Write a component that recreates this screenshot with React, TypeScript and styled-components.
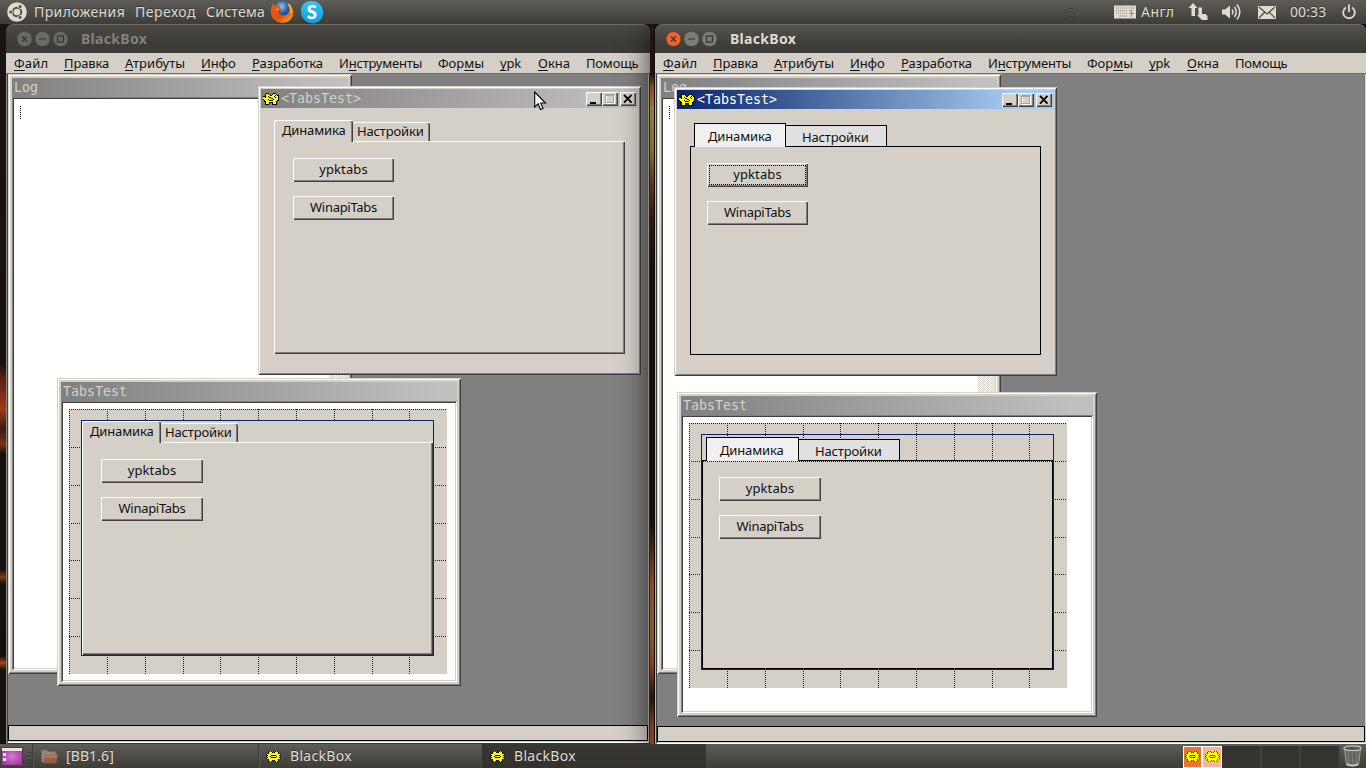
import React from "react";
import styled, { createGlobalStyle, css } from "styled-components";

const face = "#d4d0c8";
const ui = '"Noto Sans", "Open Sans", sans-serif';
const mono = '"DejaVu Sans Mono", "Liberation Mono", monospace';

const Global = createGlobalStyle`
  * { box-sizing: border-box; }
  body { margin: 0; overflow: hidden; background: #14110f; }
`;

const Desktop = styled.div`
  position: relative;
  width: 1366px;
  height: 768px;
  overflow: hidden;
  display: flex;
  flex-direction: column;
  justify-content: space-between;
  font-family: ${ui};
  background: #14110f;
  cursor: default;
`;

const Wallpaper = styled.div<{ $x: number; $w: number; $stops: string }>`
  position: absolute;
  top: 24px;
  left: ${(p) => p.$x}px;
  width: ${(p) => p.$w}px;
  height: 720px;
  background: linear-gradient(180deg, ${(p) => p.$stops});
`;

/* ---------- GNOME panels ---------- */

const Panel = styled.div`
  position: relative;
  z-index: 5;
  height: 24px;
  display: flex;
  align-items: center;
  color: #dfdbd2;
  font-size: 14px;
  line-height: 24px;
  white-space: nowrap;
  background: linear-gradient(180deg, #5d5c56 0%, #4d4c47 50%, #3d3c37 100%);
`;

const PanelText = styled.span<{ $w: number; $ls?: number; $gap?: number }>`
  width: ${(p) => p.$w}px;
  margin-left: ${(p) => p.$gap ?? 0}px;
  letter-spacing: ${(p) => p.$ls ?? 0}px;
  text-shadow: 0 -1px 0 rgba(0, 0, 0, 0.35);
`;

const PanelIcon = styled.span<{ $w: number; $gap?: number }>`
  display: flex;
  width: ${(p) => p.$w}px;
  margin-left: ${(p) => p.$gap ?? 0}px;
`;

const Grip = styled.span`
  width: 5px;
  height: 9px;
  margin-left: 3px;
  background: repeating-linear-gradient(180deg, #3c3b37 0 1px, #5a5954 1px 2px, transparent 2px 4px);
`;

const Spacer = styled.div`
  flex: 1;
`;

const Task = styled.div<{ $w: number; $active?: boolean }>`
  display: flex;
  align-items: center;
  width: ${(p) => p.$w}px;
  height: 24px;
  padding-left: 7px;
  border-left: 1px solid #3a3934;
  box-shadow: inset 1px 0 0 ${(p) => (p.$active ? "#2f2e2a" : "#5b5a55")};
  ${(p) => p.$active && css`background: linear-gradient(180deg, #383732, #33322e);`}
`;

const Pager = styled.div`
  display: flex;
  height: 22px;
  margin-top: 1px;
`;

const PagerCell = styled.div<{ $w: number; $bg?: string }>`
  width: ${(p) => p.$w}px;
  height: 22px;
  display: flex;
  align-items: center;
  justify-content: center;
  background: ${(p) => p.$bg ?? "#343330"};
  border: ${(p) => (p.$bg ? "1px solid #fff" : "0")};
  ${(p) => !p.$bg && css`border-right: 2px solid #42413d;`}
`;

/* ---------- Window-manager frame ---------- */

const Frame = styled.section<{ $x: number; $w: number; $h: number; $focus?: boolean }>`
  position: absolute;
  left: ${(p) => p.$x}px;
  top: 24px;
  width: ${(p) => p.$w}px;
  height: ${(p) => p.$h}px;
  display: flex;
  flex-direction: column;
  border-radius: 7px 7px 0 0;
  ${(p) => p.$focus && css`box-shadow: 0 8px 32px 2px rgba(0, 0, 0, 0.85);`}
`;

const FrameTitle = styled.header<{ $focus?: boolean }>`
  flex: none;
  height: 29px;
  display: flex;
  align-items: center;
  padding-left: 11px;
  padding-bottom: 1px;
  border-radius: 7px 7px 0 0;
  border-top: 1px solid #6b6a65;
  background: ${(p) =>
    p.$focus ? "linear-gradient(180deg, #55544f, #403f3a 60%, #3c3b37)" : "linear-gradient(180deg, #4a4944, #3e3d39 60%, #3c3b37)"};
  color: ${(p) => (p.$focus ? "#dfdbd2" : "#83817b")};
  font-size: 14px;
  font-weight: 700;
`;

const FrameName = styled.span`
  margin-left: 12px;
  letter-spacing: 0.3px;
`;

const MenuBar = styled.nav`
  flex: none;
  height: 20px;
  display: flex;
  background: ${face};
  color: #111;
  padding-left: 8px;
  font-size: 13px;
  line-height: 20px;
`;

const MenuItem = styled.span<{ $w: number; $ls: number }>`
  width: ${(p) => p.$w}px;
  letter-spacing: ${(p) => p.$ls}px;
  white-space: nowrap;
`;

const Key = styled.u`
  text-underline-offset: 2px;
  text-decoration-thickness: 1px;
  text-decoration-skip-ink: none;
`;

const Body = styled.div<{ $focus?: boolean }>`
  flex: 1;
  display: flex;
  flex-direction: column;
  border-top: 1px solid #6e6e6c;
  border-left: 1px solid ${(p) => (p.$focus ? "#b8b5ae" : "#8b8984")};
  border-right: ${(p) => (p.$focus ? 0 : 1)}px solid #3a3935;
  border-bottom: ${(p) => (p.$focus ? 0 : 1)}px solid #3a3935;
`;

const BodyInner = styled.div`
  flex: 1;
  display: flex;
  flex-direction: column;
  border-left: 1px solid #404040;
  border-right: 1px solid ${face};
  border-bottom: 1px solid #fff;
`;

const Mdi = styled.main`
  position: relative;
  flex: 1;
  overflow: hidden;
  background: #808080;
`;

const Status = styled.footer`
  height: 16px;
  margin-bottom: 1px;
  border: 1px solid #000;
  background: ${face};
  box-shadow: 0 1px 0 ${face};
`;

/* ---------- MDI children ---------- */

const Child = styled.section<{ $x: number; $y: number; $w: number; $h: number; $pad: number }>`
  position: absolute;
  left: ${(p) => p.$x}px;
  top: ${(p) => p.$y}px;
  width: ${(p) => p.$w}px;
  height: ${(p) => p.$h}px;
  display: flex;
  flex-direction: column;
  padding: ${(p) => p.$pad}px;
  background: ${face};
  box-shadow: inset 1px 1px 0 ${face}, inset -1px -1px 0 #404040, inset 2px 2px 0 #fff, inset -2px -2px 0 #808080;
`;

const ChildTitle = styled.header<{ $active?: boolean }>`
  flex: none;
  height: 19px;
  display: flex;
  align-items: center;
  padding-left: 2px;
  padding-right: 2px;
  background: ${(p) =>
    p.$active ? "linear-gradient(90deg, #0a246a, #a6caf0 90%)" : "linear-gradient(90deg, #808080, #c0c0c0 95%)"};
  color: ${(p) => (p.$active ? "#fff" : face)};
  font-family: ${mono};
  font-size: 13.3px;
  line-height: 18px;
`;

const ChildName = styled.span<{ $gap?: number }>`
  flex: 1;
  padding-left: ${(p) => p.$gap ?? 0}px;
`;

const Sunken = styled.div`
  flex: 1;
  display: flex;
  padding: 2px;
  background: #fff;
  box-shadow: inset 1px 1px 0 #808080, inset -1px -1px 0 #fff, inset 2px 2px 0 #404040, inset -2px -2px 0 ${face};
`;

const LogText = styled.div`
  flex: 1;
  padding: 7px 0 0 6px;
`;

const Caret = styled.div`
  width: 1px;
  height: 14px;
  background: repeating-linear-gradient(180deg, #000 0 1px, transparent 1px 2px);
`;

const ScrollTrack = styled.div`
  width: 17px;
  background: repeating-conic-gradient(${face} 0 25%, #fff 0 50%) 0 0 / 2px 2px;
`;

const TitleButton = styled.span<{ $gap?: number }>`
  width: 16px;
  height: 14px;
  margin-left: ${(p) => p.$gap ?? 0}px;
  background: ${face};
  box-shadow: inset 1px 1px 0 #fff, inset -1px -1px 0 #404040, inset -2px -2px 0 #808080;
  display: flex;
`;

const FormSheet = styled.div`
  position: relative;
  margin: 6px;
  width: 378px;
  height: 265px;
  background: ${face};
`;

const GridLines = styled.svg`
  position: absolute;
  inset: 0;
`;

const Selection = styled.div`
  position: absolute;
  left: 12px;
  top: 11px;
  width: 353px;
  height: 236px;
  border: 1px solid #0a246a;
`;

const DialogBody = styled.div`
  padding: 12px 0 0 13px;
`;

/* ---------- Tab controls ---------- */

const TabControl = styled.div<{ $solid?: boolean }>`
  width: 351px;
  height: 234px;
  display: flex;
  flex-direction: column;
  font-size: 13px;
  color: #111;
  background: ${(p) => (p.$solid ? face : "transparent")};
`;

const RaisedTabs = styled.div`
  position: relative;
  z-index: 1;
  height: 21px;
  display: flex;
  align-items: flex-end;
`;

const RaisedTab = styled.div<{ $active?: boolean }>`
  width: ${(p) => (p.$active ? 79 : 77)}px;
  height: ${(p) => (p.$active ? 22 : 19)}px;
  margin-bottom: ${(p) => (p.$active ? -1 : 0)}px;
  padding-left: ${(p) => (p.$active ? 7 : 4)}px;
  line-height: ${(p) => (p.$active ? 18 : 17)}px;
  border-top: 1px solid #fff;
  border-left: ${(p) => (p.$active ? 1 : 0)}px solid #fff;
  border-radius: 2px 2px 0 0;
  background: ${face};
  box-shadow: inset -1px 0 0 #404040, inset -2px 0 0 #808080;
  letter-spacing: -0.15px;
  white-space: nowrap;
`;

const RaisedPage = styled.div`
  flex: 1;
  padding: 16px 0 0 18px;
  border-left: 1px solid #fff;
  border-top: 1px solid #fff;
  background: ${face};
  box-shadow: inset -1px -1px 0 #404040, inset -2px -2px 0 #808080;
`;

const FlatTabs = styled.div`
  height: 25px;
  position: relative;
  z-index: 1;
  display: flex;
  align-items: flex-end;
  padding-left: 4px;
`;

const FlatTab = styled.div<{ $active?: boolean; $w: number }>`
  width: ${(p) => p.$w}px;
  height: ${(p) => (p.$active ? 24 : 21)}px;
  margin-bottom: ${(p) => (p.$active ? -1 : 0)}px;
  padding-left: ${(p) => (p.$active ? 13 : 16)}px;
  line-height: ${(p) => (p.$active ? 24 : 23)}px;
  border: 1px solid #000;
  border-bottom: 0;
  border-left-width: ${(p) => (p.$active ? 1 : 0)}px;
  background: ${(p) => (p.$active ? "#f0f0f0" : "#e0e0e0")};
  letter-spacing: -0.15px;
  white-space: nowrap;
`;

const FlatPage = styled.div<{ $dotted?: boolean }>`
  flex: 1;
  padding: 16px 0 0 16px;
  border: 1px solid #000;
  background: ${face};
  ${(p) => p.$dotted && css`background: repeating-linear-gradient(90deg, #222 0 1px, ${face} 1px 2px) 0 0 / 100% 1px no-repeat ${face};`}
`;

const Push = styled.div<{ $w: number; $focus?: boolean; $ls?: number }>`
  position: relative;
  width: ${(p) => p.$w}px;
  height: 24px;
  margin-bottom: 14px;
  text-align: center;
  line-height: 23px;
  letter-spacing: ${(p) => p.$ls ?? 0}px;
  background: ${face};
  box-shadow: inset 1px 1px 0 #fff, inset -1px -1px 0 #404040, inset -2px -2px 0 #808080;
  ${(p) => p.$focus && css`&::after { content: ""; position: absolute; inset: 2px; border: 1px dotted #000; }`}
`;

const Pointer = styled.svg`
  position: absolute;
  left: 534px;
  top: 91px;
  z-index: 6;
`;

/* ---------- Icons ---------- */

const plainPiece = [
  "...byb...byb...",
  "..byyyb.byyyb..",
  "..byyyyyyyyyb..",
  "byyyyyyyyyyyyyb",
  ".byyybbbbbyyyb.",
  "byyybyyyyybyyyb",
  ".byyybbbbbyyyb.",
  "byyyyyyyyyyyyyb",
  "..byyyyyyyyyb..",
  "..byyyb.byyyb..",
  "...byb...byb...",
];

const shadedPiece = [
  "...bbb....bbb...",
  "..byyyb..byyyb..",
  "..byyyybbyyybybb",
  "bbbyybyyyyybyyyb",
  "yybyyybbyyyybyyb",
  "yyyyyyyybbyyyyyb",
  "byyyybyyyybyyyyb",
  ".byyyybbbbyyyybb",
  ".bbyyyyyyyyyybb.",
  "..byyybbbbyyyb..",
  "..byyyb..byyyb..",
  "..bbbb...bbbbb..",
];

const Piece = ({ tint = "#000", map = plainPiece }: { tint?: string; map?: string[] }) => (
  <svg width={map[0].length} height={map.length} shapeRendering="crispEdges">
    {map.map((row, y) =>
      row.split("").map((c, x) =>
        c === "." ? null : <rect key={`${x}-${y}`} x={x} y={y} width="1" height="1" fill={c === "b" ? tint : "#ffff00"} />
      )
    )}
  </svg>
);

const UbuntuLogo = () => (
  <svg width="20" height="20" viewBox="0 0 20 20">
    <circle cx="10" cy="10" r="9.8" fill="#dfdbd2" />
    <circle cx="10" cy="10" r="4.3" fill="none" stroke="#55544f" strokeWidth="2" />
    {[0, 120, 240].map((a) => (
      <g key={a} transform={`rotate(${a} 10 10)`}>
        <path d="M5.8 10H2" stroke="#dfdbd2" strokeWidth="3.6" />
        <circle cx="3.8" cy="10" r="1.6" fill="#55544f" />
      </g>
    ))}
  </svg>
);

const Firefox = () => (
  <svg width="24" height="24" viewBox="0 0 24 24">
    <defs>
      <radialGradient id="globe" cx="45%" cy="30%" r="70%">
        <stop offset="0" stopColor="#8fc6ee" />
        <stop offset=".5" stopColor="#2a62a8" />
        <stop offset="1" stopColor="#142a5e" />
      </radialGradient>
      <linearGradient id="fox" x1="0" y1="0" x2="1" y2="1">
        <stop offset="0" stopColor="#e8601a" />
        <stop offset=".55" stopColor="#e2510f" />
        <stop offset="1" stopColor="#f8b830" />
      </linearGradient>
    </defs>
    <circle cx="12.5" cy="10" r="9" fill="url(#globe)" />
    <path d="M3 3.5 5.5 6Q8 5 9.5 6L11 8.5 8.5 11Q9 15 13 15.5 18 15.5 19 11 19.5 7 17 3 23 6 23.5 12 23 22 12.5 23 2 22.500 .8 12.500 .8 7 3 3.500Z" fill="url(#fox)" />
    <path d="M18.500 4Q22 8 21 13" stroke="#fbd44c" strokeWidth="1.300" fill="none" />
    <path d="M5 9.500 9 8.500 7.500 10.500Z" fill="#f6c06a" />
  </svg>
);

const SkypeMark = styled.span`
  width: 22px;
  height: 22px;
  border-radius: 9px 11px 9px 11px;
  background: linear-gradient(180deg, #37c3f5, #0b9fe0);
  color: #fff;
  font: 700 18px/22px "Lato", sans-serif;
  text-align: center;
  text-shadow: 0 0 1px #fff;
`;

const KeyboardIcon = () => (
  <svg width="22" height="14" viewBox="0 0 22 14">
    <rect x="0" y="0.500" width="22" height="13" fill="#dfdbd2" />
    <path d="M2 3H14M2 5.500H14M2 8H14" stroke="#8d8b85" strokeDasharray="1 1" />
    <path d="M15 3H20M15 5.500H17M5 11H13" stroke="#a5a39d" />
    <path d="M17.500 5V12M15 8.500H20" stroke="#8d8b85" />
  </svg>
);

const NetIcon = () => (
  <svg width="20" height="18" viewBox="0 0 20 18" fill="#dfdbd2">
    <path d="M5 0 9.500 5H7V13H3.500V5H.5Z" />
    <path d="M10.500 4.500H14V11H17.500L19.500 13V17H14L9 12H10.500Z" />
  </svg>
);

const SoundIcon = () => (
  <svg width="20" height="18" viewBox="0 0 20 18">
    <path d="M0 6.500H3L8 2.500V15.500L3 11.500H0Z" fill="#dfdbd2" />
    <path d="M10 6.500Q11.800 9 10 11.500M12.500 4Q16 9 12.500 14M15 1.500Q20.500 9 15 16.500" fill="none" stroke="#dfdbd2" strokeWidth="1.600" />
  </svg>
);

const MailIcon = () => (
  <svg width="18" height="13" viewBox="0 0 18 13">
    <rect width="18" height="13" fill="#dfdbd2" />
    <path d="M1 1 9 8 17 1M1 12 6.500 6.500M17 12 11.500 6.500" fill="none" stroke="#4b4a45" strokeWidth="1.200" />
  </svg>
);

const PowerIcon = () => (
  <svg width="14" height="16" viewBox="0 0 14 16" fill="none" stroke="#dfdbd2" strokeWidth="1.800">
    <path d="M4 3.500A5.800 5.800 0 1 0 10 3.500M7 0.500V8" />
  </svg>
);

const DesktopIcon = () => (
  <svg width="22" height="19" viewBox="0 0 22 19">
    <defs>
      <radialGradient id="violet">
        <stop offset="0" stopColor="#dc78cf" />
        <stop offset="1" stopColor="#a33fa8" />
      </radialGradient>
    </defs>
    <rect x=".5" y=".5" width="21" height="18" rx="1.500" fill="url(#violet)" stroke="#5c2a60" />
    <rect x="1" y="1" width="20" height="3" fill="#efe2d8" />
    <path d="M2 6H5V9H2ZM2 11H5V14H2Z" fill="#f3e8f2" />
  </svg>
);

const FolderIcon = () => (
  <svg width="17" height="15" viewBox="0 0 17 15">
    <path d="M.5 1H6L7.500 2.500H15V13H.5Z" fill="#8b8781" stroke="#6b6863" />
    <path d="M4 5.500H16.500L15.500 14.500H2Z" fill="#9a5c42" />
    <path d="M4 5.500H16.500L16 9H3.300Z" fill="#ae7459" />
  </svg>
);

const TrashIcon = () => (
  <svg width="19" height="22" viewBox="0 0 19 22">
    <path d="M1.500 3.500 3.500 20Q9.500 22.500 15.500 20L17.500 3.500Z" fill="#66645f" stroke="#a5a39e" />
    <path d="M5 6 6 18M9.500 6V19M14 6 13 18" stroke="#7c7a75" strokeWidth="1.200" />
    <ellipse cx="9.500" cy="3.200" rx="8.700" ry="2.300" fill="#55544f" stroke="#c9c7c2" strokeWidth="1.200" />
    <path d="M4 19Q9.500 22 15 19" stroke="#c9c7c2" fill="none" strokeWidth="1.500" />
  </svg>
);

const FrameButtons = ({ focus }: { focus?: boolean }) => {
  const fill = focus ? "#7d7b75" : "#6b6964";
  return (
    <svg width="52" height="16" viewBox="0 0 52 16">
      <circle cx="7.500" cy="8" r="7.300" fill={focus ? "#ee6432" : fill} stroke={focus ? "#8d3417" : "#5b5955"} strokeWidth=".6" />
      <circle cx="25.500" cy="8" r="7.300" fill={fill} />
      <circle cx="43.500" cy="8" r="7.300" fill={fill} />
      <path d="M5 5.500 10 10.500M10 5.500 5 10.500M22 8H29" stroke="#363531" strokeWidth="1.200" />
      <rect x="40.500" y="5" width="6" height="6" fill="none" stroke="#363531" strokeWidth="1.200" />
    </svg>
  );
};

const SystemButtons = () => (
  <>
    <TitleButton>
      <svg width="16" height="14"><path d="M4 11H10" stroke="#000" strokeWidth="2" /></svg>
    </TitleButton>
    <TitleButton>
      <svg width="16" height="14" fill="none" shapeRendering="crispEdges">
        <path d="M4 4H12V12H4Z" stroke="#fff" transform="translate(.5 -.5)" />
        <path d="M3 3H11V11H3Z" stroke="#aaa69f" transform="translate(.5 -.5)" />
        <path d="M3 3.500H12" stroke="#aaa69f" />
      </svg>
    </TitleButton>
    <TitleButton $gap={2}>
      <svg width="16" height="14"><path d="M4 2.800 11.500 10.700M11.500 2.800 4 10.700" stroke="#000" strokeWidth="1.900" /></svg>
    </TitleButton>
  </>
);

/* ---------- Composed parts ---------- */

const menu: [string, string, string, number, number][] = [
  ["", "Ф", "айл", 50, 0.15],
  ["", "П", "равка", 61, -0.15],
  ["", "А", "трибуты", 76, 0.05],
  ["", "И", "нфо", 51, -0.1],
  ["", "Р", "азработка", 87, -0.05],
  ["И", "н", "струменты", 99, -0.2],
  ["Фор", "м", "ы", 62, 0],
  ["", "y", "pk", 38, -0.2],
  ["", "О", "кна", 48, 0],
  ["Помощь", "", "", 60, -0.2],
];

const Menu = () => (
  <MenuBar>
    {menu.map(([before, key, after, w, ls]) => (
      <MenuItem key={before + key + after} $w={w} $ls={ls}>
        {before}
        <Key>{key}</Key>
        {after}
      </MenuItem>
    ))}
  </MenuBar>
);

const Buttons = ({ w, focus }: { w: number; focus?: boolean }) => (
  <>
    <Push $w={w} $focus={focus} $ls={0.1}>ypktabs</Push>
    <Push $w={w} $ls={-0.3}>WinapiTabs</Push>
  </>
);

const RaisedControl = ({ w }: { w: number }) => (
  <TabControl $solid>
    <RaisedTabs>
      <RaisedTab $active>Динамика</RaisedTab>
      <RaisedTab>Настройки</RaisedTab>
    </RaisedTabs>
    <RaisedPage><Buttons w={w} /></RaisedPage>
  </TabControl>
);

const FlatControl = ({ w, focus, dotted }: { w: number; focus?: boolean; dotted?: boolean }) => (
  <TabControl>
    <FlatTabs>
      <FlatTab $active $w={dotted ? 93 : 92}>Динамика</FlatTab>
      <FlatTab $w={101}>Настройки</FlatTab>
    </FlatTabs>
    <FlatPage $dotted={dotted}><Buttons w={w} focus={focus} /></FlatPage>
  </TabControl>
);

const columns = [0, 38, 76, 114, 151, 189, 227, 265, 303, 340];
const rows = [0, 38, 76, 114, 151, 189, 227];

const Editor = ({ x, y, w, h, children }: { x: number; y: number; w: number; h: number; children: React.ReactNode }) => (
  <Child $x={x} $y={y} $w={w} $h={h} $pad={4}>
    <ChildTitle><ChildName>TabsTest</ChildName></ChildTitle>
    <Sunken>
      <FormSheet>
        <GridLines width="378" height="265" stroke="#222" strokeDasharray="1 1" shapeRendering="crispEdges">
          {columns.map((c) => <path key={`c${c}`} d={`M${c + 0.5} 0V265`} />)}
          {rows.map((r) => <path key={`r${r}`} d={`M0 ${r + 0.5}H378`} />)}
        </GridLines>
        <Selection>{children}</Selection>
      </FormSheet>
    </Sunken>
  </Child>
);

const Dialog = ({ x, y, active, children }: { x: number; y: number; active?: boolean; children: React.ReactNode }) => (
  <Child $x={x} $y={y} $w={383} $h={289} $pad={3}>
    <ChildTitle $active={active}>
      <Piece map={shadedPiece} />
      <ChildName $gap={2}>&lt;TabsTest&gt;</ChildName>
      <SystemButtons />
    </ChildTitle>
    <DialogBody>{children}</DialogBody>
  </Child>
);

const Log = () => (
  <Child $x={0} $y={0} $w={344} $h={600} $pad={4}>
    <ChildTitle><ChildName>Log</ChildName></ChildTitle>
    <Sunken>
      <LogText><Caret /></LogText>
      <ScrollTrack />
    </Sunken>
  </Child>
);

export default function App() {
  return (
    <Desktop>
      <Global />
      <Wallpaper $x={0} $w={6} $stops="#1a1413 0, #15110f 340px, #5a2015 355px, #a23c14 385px, #3a1a12 405px, #7a3418 420px, #14110f 430px, #14110f 545px, #7a3a1a 553px, #14110f 560px, #120f0e 632px, #a2421c 639px, #14110f 646px" />
      <Frame $x={6} $w={644} $h={720}>
        <FrameTitle>
          <FrameButtons />
          <FrameName>BlackBox</FrameName>
        </FrameTitle>
        <Menu />
        <Body>
          <BodyInner>
            <Mdi>
              <Log />
              <Dialog x={250} y={12}><RaisedControl w={101} /></Dialog>
              <Editor x={49} y={304} w={404} h={308}><RaisedControl w={102} /></Editor>
            </Mdi>
            <Status />
          </BodyInner>
        </Body>
      </Frame>
      <Frame $x={655} $w={711} $h={720} $focus>
        <FrameTitle $focus>
          <FrameButtons focus />
          <FrameName>BlackBox</FrameName>
        </FrameTitle>
        <Menu />
        <Body $focus>
          <BodyInner>
            <Mdi>
              <Log />
              <Dialog x={17} y={13} active><FlatControl w={101} focus /></Dialog>
              <Editor x={20} y={318} w={420} h={325}><FlatControl w={102} dotted /></Editor>
            </Mdi>
            <Status />
          </BodyInner>
        </Body>
      </Frame>
      <Wallpaper $x={650} $w={4} $stops="#2a1410 0, #1a1110 50px, #8a4420 62px, #9a7a24 85px, #86701e 125px, #5a3418 160px, #2a1710 200px, #16110f 240px, #16110f 500px, #8a4a22 560px, #80601e 610px, #8a3c1a 640px, #1c1410 675px, #7a3c1c 700px, #8a4420 720px" />
      <Panel>
        <PanelIcon $w={20} $gap={7}><UbuntuLogo /></PanelIcon>
        <PanelText $gap={7} $w={101} $ls={0.4}>Приложения</PanelText>
        <PanelText $w={71} $ls={0.5}>Переход</PanelText>
        <PanelText $w={64} $ls={0.25}>Система</PanelText>
        <PanelIcon $w={31}><Firefox /></PanelIcon>
        <SkypeMark>S</SkypeMark>
        <Spacer />
        <Grip />
        <PanelIcon $w={22} $gap={41}><KeyboardIcon /></PanelIcon>
        <PanelText $gap={5} $w={47} $ls={0.5}>Англ</PanelText>
        <PanelIcon $w={34}><NetIcon /></PanelIcon>
        <PanelIcon $w={36}><SoundIcon /></PanelIcon>
        <PanelIcon $w={32}><MailIcon /></PanelIcon>
        <PanelText $w={52} $ls={0.1}>00:33</PanelText>
        <PanelIcon $w={24}><PowerIcon /></PanelIcon>
      </Panel>
      <Panel>
        <PanelIcon $w={23} $gap={1}><DesktopIcon /></PanelIcon>
        <Grip />
        <Task $w={226}>
          <PanelIcon $w={25} $gap={1}><FolderIcon /></PanelIcon>
          <PanelText $w={60} $ls={0.1}>[BB1.6]</PanelText>
        </Task>
        <Task $w={224}>
          <PanelIcon $w={24}><Piece /></PanelIcon>
          <PanelText $w={80} $ls={0.3}>BlackBox</PanelText>
        </Task>
        <Task $w={224} $active>
          <PanelIcon $w={24}><Piece /></PanelIcon>
          <PanelText $w={80} $ls={0.3}>BlackBox</PanelText>
        </Task>
        <Spacer />
        <Pager>
          <PagerCell $w={19} $bg="#e8733f"><Piece tint="#4a3a10" /></PagerCell>
          <PagerCell $w={20} $bg="#f5b59b"><Piece tint="#5a4a20" /></PagerCell>
          <PagerCell $w={40} />
          <PagerCell $w={39} />
          <PagerCell $w={39} />
        </Pager>
        <PanelIcon $w={23} $gap={3}><TrashIcon /></PanelIcon>
      </Panel>
      <Pointer width="13" height="20" viewBox="0 0 13 20">
        <path d="M.7 1V16L4.200 12.800 6.500 18.500 9 17.400 6.700 12H11.500Z" fill="#fff" stroke="#000" strokeWidth="1.100" />
      </Pointer>
    </Desktop>
  );
}
